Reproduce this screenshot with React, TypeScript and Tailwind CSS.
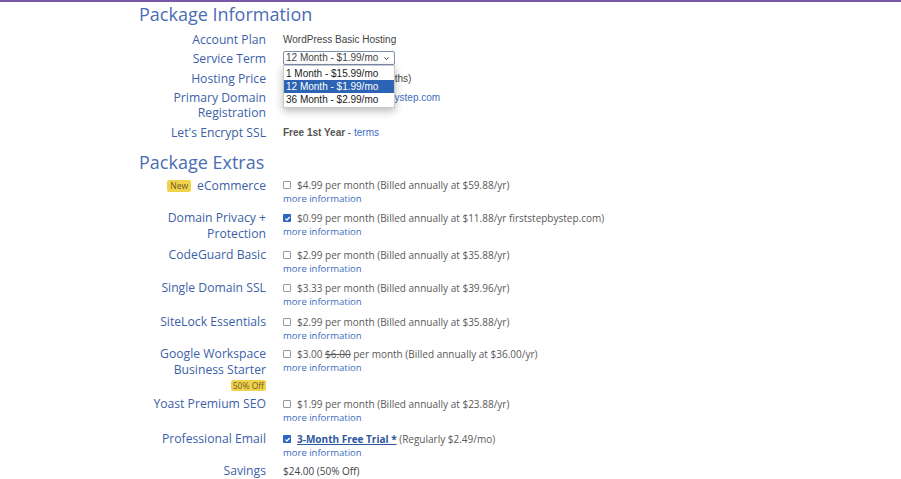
import type { ReactNode } from "react";

const label = "text-right text-[#3d5fa8] text-[12.2px] font-['Open_Sans',sans-serif]";
const link = "text-[#3b6cc0]";

function Box({ checked }: { checked?: boolean }) {
  if (checked) {
    return (
      <span className="inline-flex items-center justify-center w-[8px] h-[8px] rounded-[1px] bg-[#2a64c4] mr-[6px] shrink-0">
        <svg viewBox="0 0 10 10" className="w-[7px] h-[7px]">
          <path d="M2 5.2 4.1 7.2 8.2 2.8" fill="none" stroke="#fff" strokeWidth="1.8" />
        </svg>
      </span>
    );
  }
  return <span className="inline-block w-[8px] h-[8px] rounded-[1px] border border-[#999] bg-white mr-[6px] shrink-0" />;
}

function InfoRow({ name, children }: { name: ReactNode; children: ReactNode }) {
  return (
    <div className="flex mb-[4.5px]">
      <div className={`${label} w-[127px] leading-[15px]`}>{name}</div>
      <div className="ml-[17px] flex-1 text-[10px] leading-[15px] text-[#444] font-['Liberation_Sans',Arial,sans-serif]">
        {children}
      </div>
    </div>
  );
}

function ExtraRow({
  name,
  checked,
  gap = "mb-[5px]",
  children,
}: {
  name: ReactNode;
  checked?: boolean;
  gap?: string;
  children: ReactNode;
}) {
  return (
    <div className={`flex ${gap}`}>
      <div className={`${label} w-[127px] leading-[16px]`}>{name}</div>
      <div className="ml-[17px] flex-1 pt-[2px] font-['Open_Sans',sans-serif] text-[#595959]">
        <div className="flex items-center text-[10px] leading-[13px]">
          <Box checked={checked} />
          <span>{children}</span>
        </div>
        <div className={`${link} text-[9.5px] leading-[13px]`}>more information</div>
      </div>
    </div>
  );
}

function TermSelect() {
  const options = ["1 Month - $15.99/mo", "12 Month - $1.99/mo", "36 Month - $2.99/mo"];
  return (
    <div className="relative w-[112px]">
      <div className="flex items-center justify-between h-[14px] border border-[#7d8db0] rounded-[2px] px-[2px] text-[10px] text-[#444] bg-white">
        <span className="leading-[12px]">12 Month - $1.99/mo</span>
        <svg viewBox="0 0 10 10" className="w-[7px] h-[7px] mr-[2px]">
          <path d="M2 3.5 5 6.5 8 3.5" fill="none" stroke="#333" strokeWidth="1.4" />
        </svg>
      </div>
      <div className="absolute left-0 top-[14px] w-[112px] z-10 bg-white border border-[#c9c9c9] shadow-[0_3px_8px_rgba(0,0,0,0.28)] py-px">
        {options.map((o, i) => (
          <div
            key={o}
            className={`px-[2px] h-[13px] leading-[13px] text-[10px] ${
              i === 1 ? "bg-[#2c63b2] text-white" : "text-[#222]"
            }`}
          >
            {o}
          </div>
        ))}
      </div>
    </div>
  );
}

export default function App() {
  return (
    <div className="min-h-[479px] bg-white border-t-2 border-[#7a58a8] pl-[139px]">
      <h2 className="text-[18px] leading-[24px] text-[#4a6db4] font-['Open_Sans',sans-serif]">Package Information</h2>

      <div className="mt-[5.5px]">
        <InfoRow name="Account Plan">WordPress Basic Hosting</InfoRow>
        <InfoRow name="Service Term">
          <TermSelect />
        </InfoRow>
        <InfoRow name="Hosting Price">$23.88 (Billed for 12 months)</InfoRow>
        <InfoRow
          name={
            <>
              Primary Domain
              <br />
              Registration
            </>
          }
        >
          <b className="text-[#555]">Free 1st Year</b> - <span className={link}>firststepbystep.com</span>
        </InfoRow>
        <InfoRow name="Let's Encrypt SSL">
          <b className="text-[#555]">Free 1st Year</b> - <span className={link}>terms</span>
        </InfoRow>
      </div>

      <h2 className="mt-[10px] text-[18px] leading-[24px] text-[#4a6db4] font-['Open_Sans',sans-serif]">Package Extras</h2>

      <div className="mt-[3px]">
        <ExtraRow
          name={
            <span className="inline-flex items-center">
              <span className="inline-block bg-[#f1d24b] text-[#6b5a2a] text-[8.5px] leading-[12px] px-[3px] rounded-[2px] mr-[6px]">
                New
              </span>
              eCommerce
            </span>
          }
        >
          $4.99 per month (Billed annually at $59.88/yr)
        </ExtraRow>
        <ExtraRow
          checked
          name={
            <>
              Domain Privacy +
              <br />
              Protection
            </>
          }
        >
          $0.99 per month (Billed annually at $11.88/yr firststepbystep.com)
        </ExtraRow>
        <ExtraRow name="CodeGuard Basic">$2.99 per month (Billed annually at $35.88/yr)</ExtraRow>
        <ExtraRow name="Single Domain SSL" gap="mb-[6px]">
          $3.33 per month (Billed annually at $39.96/yr)
        </ExtraRow>
        <ExtraRow name="SiteLock Essentials" gap="mb-[4px]">
          $2.99 per month (Billed annually at $35.88/yr)
        </ExtraRow>
        <ExtraRow
          name={
            <>
              Google Workspace
              <br />
              Business Starter
              <div className="flex justify-end mt-[2px]">
                <span className="inline-block bg-[#f1d24b] text-[#6b5a2a] text-[8.5px] leading-[11px] px-[2px] rounded-[2px]">
                  50% Off
                </span>
              </div>
            </>
          }
        >
          $3.00 <span className="line-through">$6.00</span> per month (Billed annually at $36.00/yr)
        </ExtraRow>
        <ExtraRow name="Yoast Premium SEO" gap="mb-[7px]">
          $1.99 per month (Billed annually at $23.88/yr)
        </ExtraRow>
        <ExtraRow checked name="Professional Email" gap="mb-[4px]">
          <span className="font-bold underline text-[#2f56a0]">3-Month Free Trial *</span> (Regularly $2.49/mo)
        </ExtraRow>
        <div className="flex">
          <div className={`${label} w-[127px] leading-[16px]`}>Savings</div>
          <div className="ml-[17px] text-[10px] leading-[16px] text-[#444] font-['Open_Sans',sans-serif]">
            $24.00 (50% Off)
          </div>
        </div>
      </div>
    </div>
  );
}
